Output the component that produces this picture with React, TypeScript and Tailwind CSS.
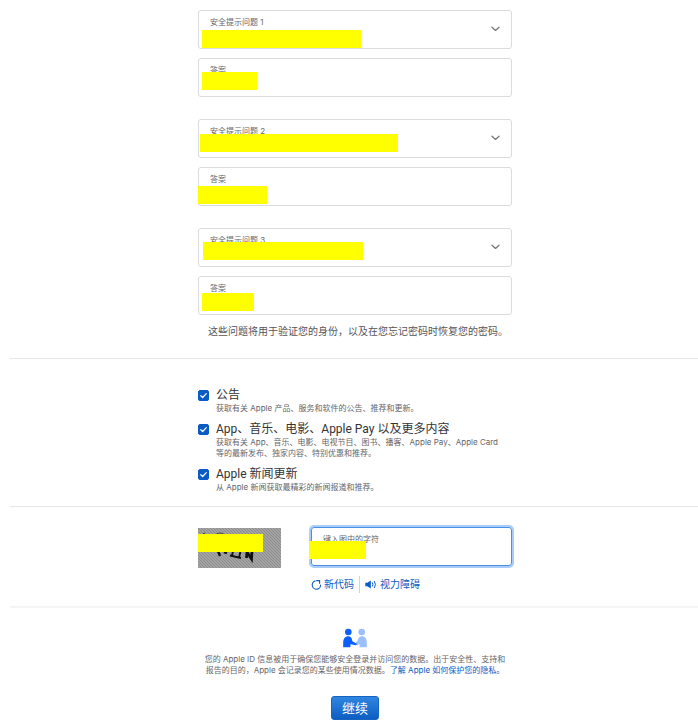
import type { ReactNode } from 'react';

const questions = [
  { id: 1, questionMask: 'left-[4px] top-[20px] h-[18px] w-[159px]', answerMask: 'left-[4px] top-[14px] h-[18px] w-[55px]' },
  { id: 2, questionMask: 'left-[2px] top-[15px] h-[18px] w-[198px]', answerMask: 'left-0 top-[19px] h-[18px] w-[69px]' },
  { id: 3, questionMask: 'left-[5px] top-[14px] h-[18px] w-[160px]', answerMask: 'left-[4px] top-[17px] h-[18px] w-[52px]' },
];

const subscriptions = [
  {
    id: 'announcements',
    title: '公告',
    lines: ['获取有关 Apple 产品、服务和软件的公告、推荐和更新。'],
  },
  {
    id: 'apps',
    title: 'App、音乐、电影、Apple Pay 以及更多内容',
    lines: [
      '获取有关 App、音乐、电影、电视节目、图书、播客、Apple Pay、Apple Card',
      '等的最新发布、独家内容、特别优惠和推荐。',
    ],
  },
  {
    id: 'news',
    title: 'Apple 新闻更新',
    lines: ['从 Apple 新闻获取最精彩的新闻报道和推荐。'],
  },
];

function Mask({ className }: { className: string }) {
  return <div className={`pointer-events-none absolute z-10 bg-[#ffff00] ${className}`} />;
}

function Field({ id, label, children }: { id: string; label: string; children: ReactNode }) {
  return (
    <div className="relative h-[39px]">
      <label htmlFor={id} className="pointer-events-none absolute left-3 top-[6px] text-[8px] leading-3 text-[#66666a]">
        {label}
      </label>
      {children}
    </div>
  );
}

const control = 'block h-full w-full appearance-none rounded-[3px] border border-[#dcdcdf] bg-transparent px-3 pt-3 text-[10px] outline-none';

function SecurityQuestion({ id, questionMask, answerMask }: (typeof questions)[number]) {
  return (
    <div className="flex flex-col gap-[9px]">
      <Field id={`question-${id}`} label={`安全提示问题 ${id}`}>
        <select id={`question-${id}`} className={control} />
        <svg
          className="pointer-events-none absolute right-3 top-4 h-[6px] w-[9px] text-[#77777b]"
          viewBox="0 0 9 6"
          fill="none"
          stroke="currentColor"
          strokeWidth="1.3"
          strokeLinecap="round"
          strokeLinejoin="round"
        >
          <path d="M1 1.200l3.500 3.200L8 1.200" />
        </svg>
        <Mask className={questionMask} />
      </Field>
      <Field id={`answer-${id}`} label="答案">
        <input id={`answer-${id}`} type="text" className={control} />
        <Mask className={answerMask} />
      </Field>
    </div>
  );
}

function CaptchaImage() {
  return (
    <svg className="block h-10 w-[83px]" viewBox="0 0 83 40" aria-hidden="true">
      <defs>
        <pattern id="hatch" width="3" height="3" patternUnits="userSpaceOnUse">
          <rect width="3" height="3" fill="#a3a3a3" />
          <path d="M0 0l3 3" stroke="#8c8c8c" strokeWidth="1" />
        </pattern>
      </defs>
      <rect width="83" height="40" fill="url(#hatch)" />
      <g fill="none" stroke="#111">
        <path d="M5 6l2-1M18 6.500q4-3 8 0" strokeWidth="1.2" stroke="#444" />
        <path d="M20 23l2 5M26 24l3 1" strokeWidth="2.4" />
        <path d="M35 23l-1 5M32 27.500l11 2.500M42.500 23l-1.500 7" strokeWidth="1.8" />
        <path d="M48.500 30l.5-6 4.500 7 .5-8" strokeWidth="2.800" />
      </g>
    </svg>
  );
}

function RefreshIcon() {
  return (
    <svg className="h-[11px] w-[11px]" viewBox="0 0 11 11" fill="none" stroke="currentColor" strokeWidth="1.1" aria-hidden="true">
      <path d="M4.500 1.900A4.200 4.200 0 1 0 9.600 5.600" />
      <path d="M5.200 1.600h3.400v3.200" />
    </svg>
  );
}

function SpeakerIcon() {
  return (
    <svg className="h-[11px] w-3" viewBox="0 0 12 11" aria-hidden="true">
      <path d="M.3 3.800h2L5.800 1.600v7.800L2.300 7.200h-2z" fill="currentColor" />
      <path d="M7.300 3.500q1.200 2 0 4M9.300 2.100q2.200 3.400 0 6.800" fill="none" stroke="currentColor" />
    </svg>
  );
}

function PrivacyIcon() {
  return (
    <svg className="h-5 w-6" viewBox="0 0 24 20" aria-hidden="true">
      <g fill="#9bc0ff">
        <circle cx="18.700" cy="4" r="3.300" />
        <path d="M18.600 8.300c3.500 0 5.200 2.600 5.200 6.100v4.900h-7.200v-3.600l-2.500 1.700-1.900-1.800 2.600-3.300c.6-2.600 1.800-4 3.800-4z" />
      </g>
      <g fill="#0b5fff">
        <circle cx="5.300" cy="4" r="3.300" />
        <path d="M5.400 8.300c2.300 0 3.400 1.600 4 5l4 2.200c.8.500.3 1.800-.7 1.800l-5.300-1.100v3.100H.2v-4.900c0-3.500 1.700-6.100 5.200-6.100z" />
      </g>
    </svg>
  );
}

export default function App() {
  return (
    <form
      lang="zh-CN"
      className="bg-white pb-[7px] pl-[10px] pt-[10px] font-['Inter','Noto_Sans_CJK_SC',sans-serif] text-[#333336]"
      onSubmit={(e) => e.preventDefault()}
    >
      <section className="border-b border-[#e6e6e8] pb-[19px] pl-[2px]">
        <div className="mx-auto flex w-full max-w-[314px] flex-col gap-[22px]">
          {questions.map((q) => (
            <SecurityQuestion key={q.id} {...q} />
          ))}
        </div>
        <p className="mx-auto mt-2 w-full max-w-[314px] whitespace-nowrap pl-[10px] text-[10px] leading-4 text-[#55555a]">
          这些问题将用于验证您的身份，以及在您忘记密码时恢复您的密码。
        </p>
      </section>

      <section className="border-b border-[#e6e6e8] pb-[13px] pl-[2px] pt-7">
        <div className="mx-auto flex w-full max-w-[314px] flex-col gap-[7px]">
          {subscriptions.map((s) => (
            <div key={s.id} className="flex gap-[7px]">
              <span className="relative mt-[3px] h-[11px] w-[11px] shrink-0">
                <input
                  id={s.id}
                  type="checkbox"
                  defaultChecked
                  className="peer block h-full w-full appearance-none rounded-[2px] border border-[#86868b] checked:border-[#0b5bc4] checked:bg-[#0b5bc4]"
                />
                <svg
                  className="pointer-events-none absolute inset-0 hidden peer-checked:block"
                  viewBox="0 0 11 11"
                  fill="none"
                  stroke="white"
                  strokeWidth="1.2"
                  strokeLinecap="round"
                  strokeLinejoin="round"
                >
                  <path d="M2.800 5.700l1.900 1.800 3.600-3.800" />
                </svg>
              </span>
              <div>
                <label
                  htmlFor={s.id}
                  className="block whitespace-nowrap font-['Roboto','Noto_Sans_CJK_SC',sans-serif] text-[12px] leading-4"
                >
                  {s.title}
                </label>
                <p className="whitespace-nowrap text-[8px] leading-[11px] text-[#66666a]">
                  {s.lines.map((line) => (
                    <span key={line} className="block">{line}</span>
                  ))}
                </p>
              </div>
            </div>
          ))}
        </div>
      </section>

      <section className="border-b-2 border-[#f5f5f6] pb-[13px] pl-[2px] pt-5">
        <div className="mx-auto flex w-full max-w-[314px] items-start gap-[30px]">
          <div className="relative mt-px shrink-0">
            <CaptchaImage />
            <Mask className="left-0 top-[6px] h-[18px] w-[65px]" />
          </div>
          <div className="flex-1">
            <Field id="captcha" label="键入图中的字符">
              <input
                id="captcha"
                type="text"
                className="block h-full w-full rounded-[3px] border border-[#4a8fe6] bg-transparent px-3 pt-3 text-[10px] outline-none ring-2 ring-[#a9cdf8]"
              />
              <Mask className="-left-[2px] top-[14px] h-[18px] w-[57px]" />
            </Field>
            <div className="mt-[9px] flex h-[18px] items-center text-[10px] text-[#0b5bc4]">
              <button type="button" className="flex items-center gap-[2px]">
                <RefreshIcon />
                新代码
              </button>
              <span className="mx-[5px] h-[17px] w-px bg-[#d2d2d7]" />
              <button type="button" className="flex items-center gap-[3px]">
                <SpeakerIcon />
                视力障碍
              </button>
            </div>
          </div>
        </div>
      </section>

      <section className="flex flex-col items-center pl-[2px] pt-5">
        <PrivacyIcon />
        <p className="mt-[6px] whitespace-nowrap text-center text-[8px] leading-[11px] text-[#66666a]">
          您的 Apple ID 信息被用于确保您能够安全登录并访问您的数据。出于安全性、支持和
          <br />
          报告的目的，Apple 会记录您的某些使用情况数据。
          <a href="#privacy" className="text-[#0b5bc4]">了解 Apple 如何保护您的隐私。</a>
        </p>
        <button
          type="submit"
          className="mt-5 h-6 rounded-[3px] border border-[#1663c0] bg-linear-to-b from-[#2f86e0] to-[#0d5dc4] px-[10px] text-[13px] leading-none text-white"
        >
          继续
        </button>
      </section>
    </form>
  );
}
